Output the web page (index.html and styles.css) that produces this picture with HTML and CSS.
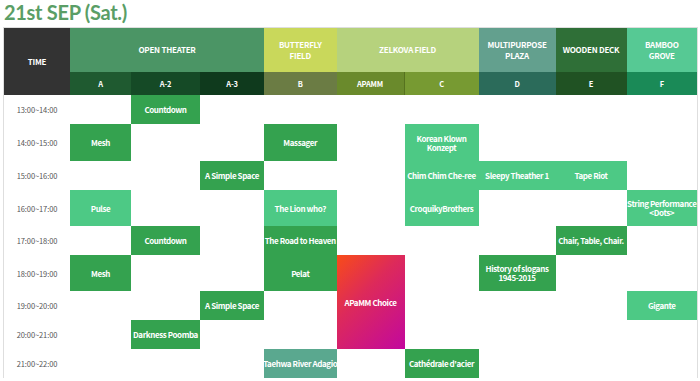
FILE: index.html
```html
<!DOCTYPE html>
<html lang="en">
<head>
<meta charset="utf-8">
<title>21st SEP (Sat.)</title>
<link rel="stylesheet" href="styles.css">
</head>
<body>
<div class="page">
  <h1 class="title">21st SEP (Sat.)</h1>
  <div class="schedule">
    <div class="h h-time">TIME</div>
    <div class="h h-open span-c3">OPEN THEATER</div>
    <div class="h h-butterfly">BUTTERFLY<br>FIELD</div>
    <div class="h h-zelkova span-c2">ZELKOVA FIELD</div>
    <div class="h h-multi">MULTIPURPOSE<br>PLAZA</div>
    <div class="h h-wooden">WOODEN DECK</div>
    <div class="h h-bamboo">BAMBOO<br>GROVE</div>

    <div class="s s-a">A</div>
    <div class="s s-a2">A-2</div>
    <div class="s s-a3">A-3</div>
    <div class="s s-b">B</div>
    <div class="s s-apamm">APAMM</div>
    <div class="s s-c">C</div>
    <div class="s s-d">D</div>
    <div class="s s-e">E</div>
    <div class="s s-f">F</div>

    <!-- 13:00 -->
    <div class="t">13:00~14:00</div>
    <div class="c"></div>
    <div class="c ev dark">Countdown</div>
    <div class="c"></div><div class="c"></div><div class="c"></div><div class="c"></div><div class="c"></div><div class="c"></div><div class="c"></div>

    <!-- 14:00 -->
    <div class="t">14:00~15:00</div>
    <div class="c ev dark">Mesh</div>
    <div class="c"></div><div class="c"></div>
    <div class="c ev dark">Massager</div>
    <div class="c"></div>
    <div class="c ev light">Korean Klown<br>Konzept</div>
    <div class="c"></div><div class="c"></div><div class="c"></div>

    <!-- 15:00 -->
    <div class="t">15:00~16:00</div>
    <div class="c"></div><div class="c"></div>
    <div class="c ev dark">A Simple Space</div>
    <div class="c"></div><div class="c"></div>
    <div class="c ev light">Chim Chim Che-ree</div>
    <div class="c ev light">Sleepy Theather 1</div>
    <div class="c ev light">Tape Riot</div>
    <div class="c"></div>

    <!-- 16:00 -->
    <div class="t">16:00~17:00</div>
    <div class="c ev light">Pulse</div>
    <div class="c"></div><div class="c"></div>
    <div class="c ev light">The Lion who?</div>
    <div class="c"></div>
    <div class="c ev light">CroquikyBrothers</div>
    <div class="c"></div><div class="c"></div>
    <div class="c ev light">String Performance<br>&lt;Dots&gt;</div>

    <!-- 17:00 -->
    <div class="t">17:00~18:00</div>
    <div class="c"></div>
    <div class="c ev dark">Countdown</div>
    <div class="c"></div>
    <div class="c ev dark">The Road to Heaven</div>
    <div class="c"></div><div class="c"></div><div class="c"></div>
    <div class="c ev dark">Chair, Table, Chair.</div>
    <div class="c"></div>

    <!-- 18:00 -->
    <div class="t">18:00~19:00</div>
    <div class="c ev dark">Mesh</div>
    <div class="c"></div><div class="c"></div>
    <div class="c ev dark">Pelat</div>
    <div class="c ev special span-r3">APaMM Choice</div>
    <div class="c"></div>
    <div class="c ev dark">History of slogans<br>1945-2015</div>
    <div class="c"></div><div class="c"></div>

    <!-- 19:00 -->
    <div class="t">19:00~20:00</div>
    <div class="c"></div><div class="c"></div>
    <div class="c ev dark">A Simple Space</div>
    <div class="c"></div>
    <div class="c"></div><div class="c"></div><div class="c"></div>
    <div class="c ev light">Gigante</div>

    <!-- 20:00 -->
    <div class="t">20:00~21:00</div>
    <div class="c"></div>
    <div class="c ev dark">Darkness Poomba</div>
    <div class="c"></div><div class="c"></div>
    <div class="c"></div><div class="c"></div><div class="c"></div><div class="c"></div>

    <!-- 21:00 -->
    <div class="t">21:00~22:00</div>
    <div class="c"></div><div class="c"></div><div class="c"></div>
    <div class="c ev teal">Taehwa River Adagio</div>
    <div class="c"></div>
    <div class="c ev dark">Cathédrale d'acier</div>
    <div class="c"></div><div class="c"></div><div class="c"></div>
  </div>
</div>
</body>
</html>
```

FILE: styles.css
```css
html, body {
  margin: 0;
  padding: 0;
  background: #ffffff;
}

.page {
  padding: 0 3px 0 4px;
  font-family: "Noto Sans CJK KR", "Noto Sans", sans-serif;
}

.title {
  margin: 0 0 4px 0;
  height: 24px;
  font-family: "Lato", "Open Sans", sans-serif;
  font-weight: 700;
  font-size: 20px;
  line-height: 24px;
  color: #5a9e66;
  letter-spacing: -0.3px;
  white-space: nowrap;
}

.schedule {
  display: grid;
  grid-template-columns: 66px 61px 69px 64px 72.5px 68px 74px 77px 71px 70.5px;
  grid-template-rows: 44px 23px 29px 37px 29px 36px 29px 36px 29px 29px 29px;
  width: 693px;
  box-shadow: 0 0 0 1px #dedede;
  background: #ffffff;
}

.h, .s, .t, .ev {
  display: flex;
  align-items: center;
  justify-content: center;
  text-align: center;
  white-space: nowrap;
}

.h {
  color: #ffffff;
  font-weight: 700;
  font-size: 8px;
  line-height: 11.5px;
  letter-spacing: -0.25px;
}

.s {
  color: #ffffff;
  font-weight: 700;
  font-size: 7.5px;
  letter-spacing: -0.2px;
}

.span-c3 { grid-column: span 3; }
.span-c2 { grid-column: span 2; }
.span-r3 { grid-row: span 3; }

.h-time { grid-row: span 2; background: #333333; }
.h-open { background: #4b9565; }
.h-butterfly { background: #c9d85b; }
.h-zelkova { background: #b6d27d; }
.h-multi { background: #63a08e; }
.h-wooden { background: #2f6f37; }
.h-bamboo { background: #56c994; }

.s-a { background: #1f5a30; }
.s-a2 { background: #154a26; }
.s-a3 { background: #0f3a1d; }
.s-b { background: #6b7c44; }
.s-apamm { background: #6a8a2c; border-right: 1px solid #56721f; }
.s-c { background: #779a32; }
.s-d { background: #2b6b5a; }
.s-e { background: #205223; }
.s-f { background: #1a8a57; }

.t {
  color: #555555;
  font-size: 7.5px;
  letter-spacing: -0.1px;
}

.ev {
  color: #ffffff;
  font-weight: 700;
  font-size: 8px;
  line-height: 9px;
  letter-spacing: -0.4px;
}

.dark { background: #34a24f; }
.light { background: #4dc985; }
.teal { background: #5aa88f; }
.special { background: linear-gradient(135deg, #f84c18 0%, #dd2a5a 40%, #c2089e 100%); }
```
